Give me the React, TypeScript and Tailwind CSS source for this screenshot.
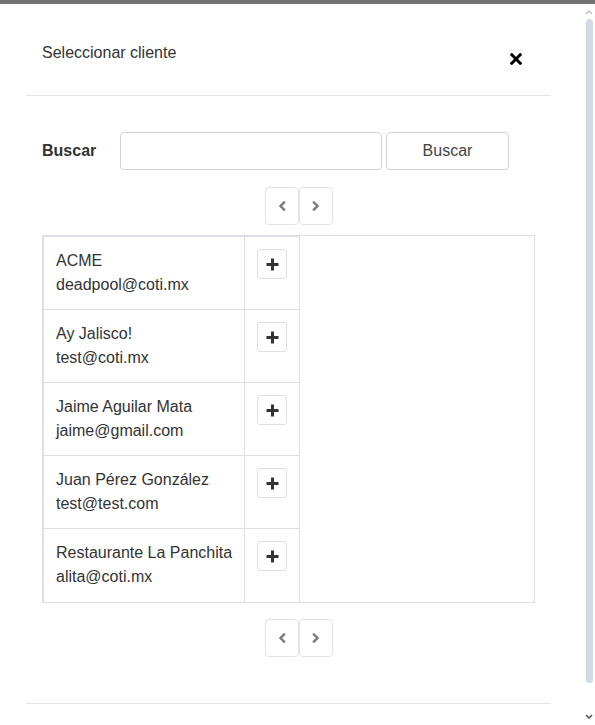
import React from "react";

const clients = [
  { name: "ACME", email: "deadpool@coti.mx" },
  { name: "Ay Jalisco!", email: "test@coti.mx" },
  { name: "Jaime Aguilar Mata", email: "jaime@gmail.com" },
  { name: "Juan Pérez González", email: "test@test.com" },
  { name: "Restaurante La Panchita", email: "alita@coti.mx" },
];

function Chevron({ dir }: { dir: "left" | "right" }) {
  return (
    <svg width="8" height="10" viewBox="0 0 8 10">
      {dir === "left" ? (
        <path d="M6 1.5 L2.5 5 L6 8.5" fill="none" stroke="#7a7a7a" strokeWidth="2.4" strokeLinecap="square" />
      ) : (
        <path d="M2 1.5 L5.5 5 L2 8.5" fill="none" stroke="#7a7a7a" strokeWidth="2.4" strokeLinecap="square" />
      )}
    </svg>
  );
}

function Pager() {
  return (
    <div className="flex ml-[239px]">
      <button className="w-[34px] h-[38px] border border-[#e3e3e3] rounded-[4px] bg-white flex items-center justify-center">
        <Chevron dir="left" />
      </button>
      <button className="w-[34px] h-[38px] border border-[#e3e3e3] rounded-[4px] bg-white flex items-center justify-center">
        <Chevron dir="right" />
      </button>
    </div>
  );
}

export default function App() {
  return (
    <div className="w-[595px] h-[725px] overflow-hidden bg-white flex flex-col font-['Liberation_Sans',Arial,sans-serif] text-[16px] text-[#333]">
      <div className="h-[4px] bg-[#747474] shrink-0" />
      <div className="flex flex-1">
        <div className="w-[580px] pl-[26px] pr-[29px]">
          {/* header */}
          <div className="h-[92px] border-b border-[#e5e5e5] flex justify-between pl-[16px] pr-[29px] pt-[38px]">
            <div className="leading-[22px] h-[22px]">Seleccionar cliente</div>
            <svg className="mt-[11px]" width="12" height="12" viewBox="0 0 12 12">
              <path d="M1.8 1.8 L10.2 10.2 M10.2 1.8 L1.8 10.2" stroke="#000" strokeWidth="3" strokeLinecap="square" />
            </svg>
          </div>
          {/* search */}
          <div className="flex items-center mt-[36px] pl-[16px]">
            <div className="w-[78px] font-bold leading-[22px]">Buscar</div>
            <input className="w-[262px] h-[38px] border border-[#cfd3d8] rounded-[4px] outline-none px-3" />
            <button className="ml-[4px] w-[123px] h-[38px] border border-[#cfd3d8] rounded-[4px] bg-white text-[#444] leading-[22px]">
              Buscar
            </button>
          </div>
          <div className="mt-[17px]">
            <Pager />
          </div>
          {/* table */}
          <div className="mt-[10px] ml-[16px] w-[493px] h-[368px] border border-[#dcdfe4]">
            <div className="w-[257px] border border-[#dcdfe4]">
              {clients.map((c, i) => (
                <div key={c.name} className={`flex h-[73px] ${i < clients.length - 1 ? "border-b border-[#dcdfe4]" : ""}`}>
                  <div className="w-[201px] shrink-0 border-r border-[#dcdfe4] pl-[12px] pt-[12px] leading-[24px] whitespace-nowrap">
                    <div>{c.name}</div>
                    <div>{c.email}</div>
                  </div>
                  <div className="flex-1 pl-[12px] pt-[12px]">
                    <button className="w-[30px] h-[30px] border border-[#dcdfe4] rounded-[3px] bg-white flex items-center justify-center">
                      <svg width="13" height="13" viewBox="0 0 13 13">
                        <path d="M6.5 0.5 V12.5 M0.5 6.5 H12.5" stroke="#333" strokeWidth="3" />
                      </svg>
                    </button>
                  </div>
                </div>
              ))}
            </div>
          </div>
          <div className="mt-[16px]">
            <Pager />
          </div>
          <div className="mt-[46px] border-t border-[#e5e5e5]" />
        </div>
        {/* scrollbar */}
        <div className="w-[15px] flex flex-col items-center pl-[3px]">
          <svg className="mt-[6px]" width="8" height="5" viewBox="0 0 8 5">
            <path d="M1 4 L4 1 L7 4" fill="none" stroke="#c4c4c4" strokeWidth="1.6" />
          </svg>
          <div className="mt-[4px] w-[7px] h-[664px] rounded-full bg-[#d3dce4]" />
          <svg className="mt-[31px]" width="8" height="5" viewBox="0 0 8 5">
            <path d="M1 1 L4 4 L7 1" fill="none" stroke="#555" strokeWidth="1.6" />
          </svg>
        </div>
      </div>
    </div>
  );
}
